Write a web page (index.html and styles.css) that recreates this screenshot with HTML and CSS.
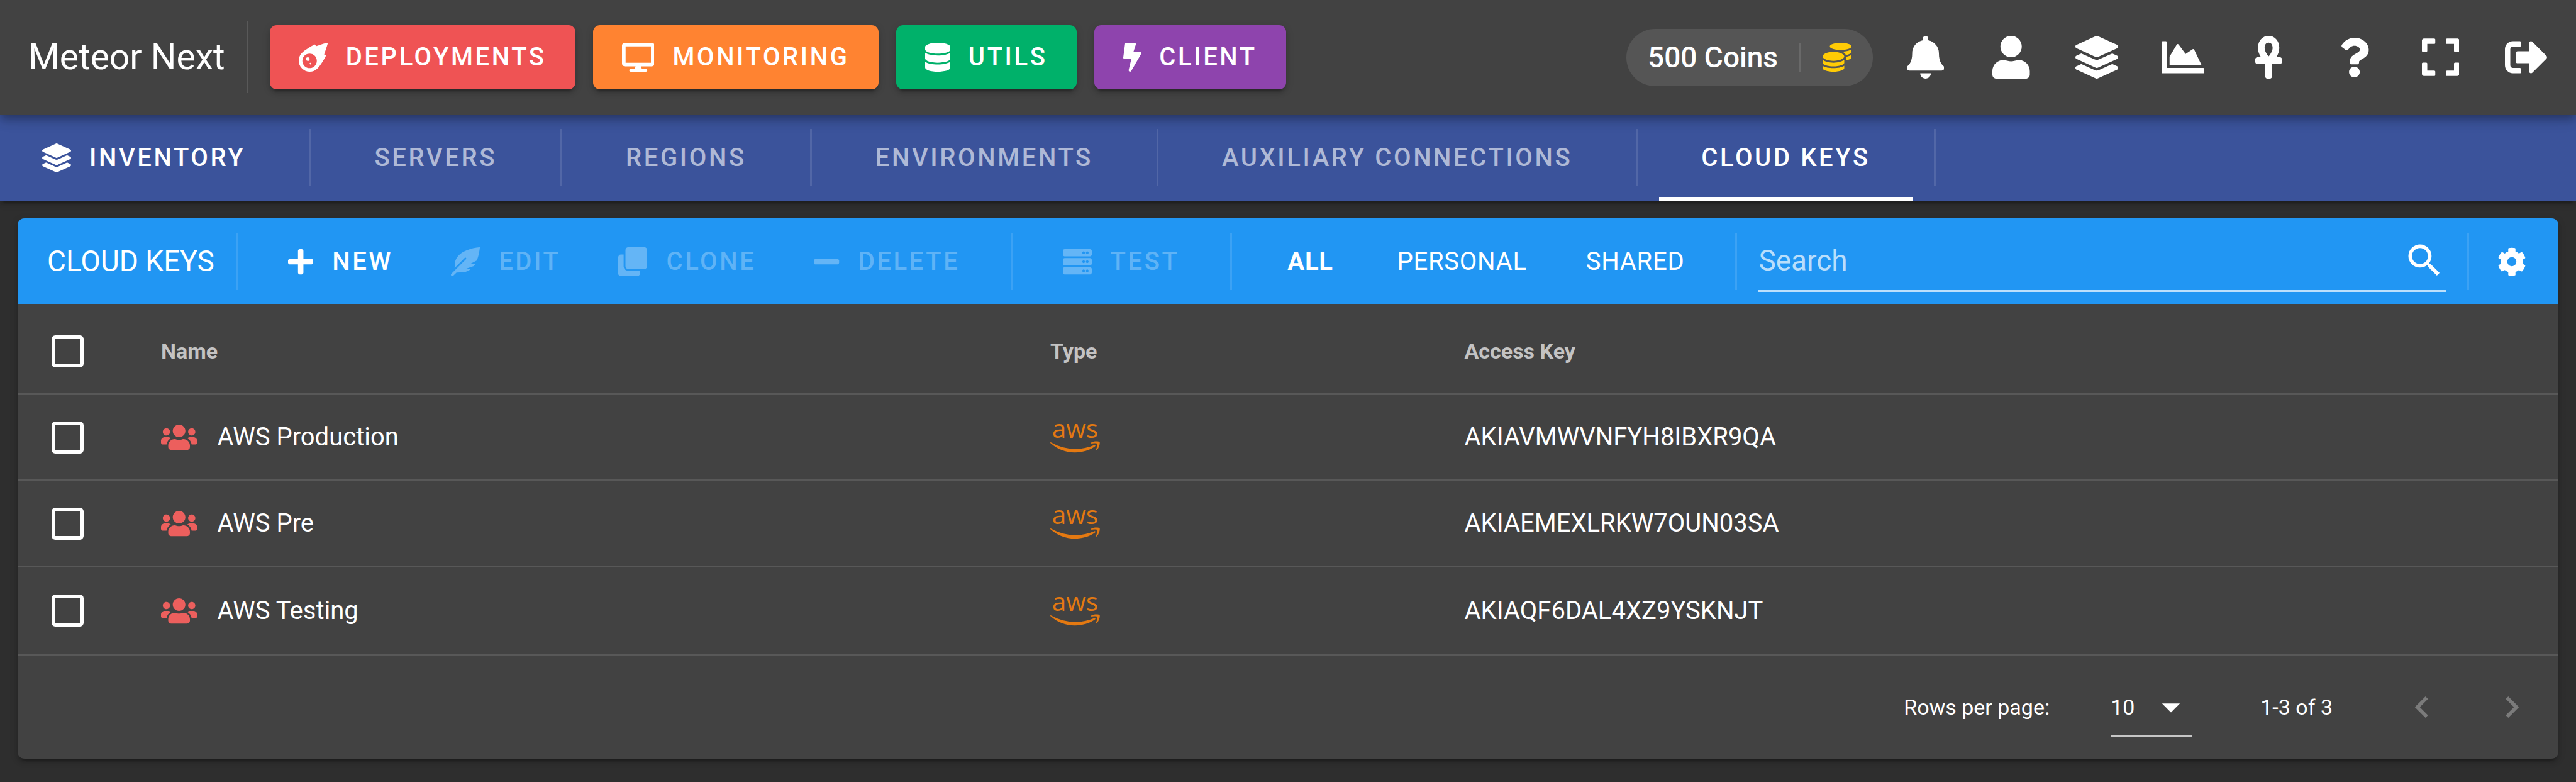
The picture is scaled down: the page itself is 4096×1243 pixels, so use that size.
FILE: index.html
```html
<!DOCTYPE html>
<html lang="en">
<head>
<meta charset="utf-8">
<title>Meteor Next - Cloud Keys</title>
<meta name="viewport" content="width=device-width, initial-scale=1">
<link rel="stylesheet" href="styles.css">
</head>
<body>
<svg class="sprite" aria-hidden="true">
  <defs>
    <path id="i-meteor" d="M511.328,20.8027c-11.60759,38.70264-34.30724,111.70173-61.30311,187.70077,6.99893,2.09372,13.4042,4,18.60653,5.59368a16.06158,16.06158,0,0,1,9.49854,22.906c-22.106,42.29635-82.69047,152.795-142.47819,214.40356-.99984,1.09373-1.99969,2.5-2.99954,3.49995A194.83046,194.83046,0,1,1,57.085,179.41009c.99985-1,2.40588-2,3.49947-3,61.59994-59.90549,171.97367-120.40473,214.37343-142.4982a16.058,16.058,0,0,1,22.90274,9.49988c1.59351,5.09368,3.49947,11.5936,5.5929,18.59351C379.34818,35.00565,452.43074,12.30281,491.12794.70921A16.18325,16.18325,0,0,1,511.328,20.8027ZM319.951,320.00207A127.98041,127.98041,0,1,0,191.97061,448.00046,127.97573,127.97573,0,0,0,319.951,320.00207Zm-127.98041-31.9996a31.9951,31.9951,0,1,1-31.9951-31.9996A31.959,31.959,0,0,1,191.97061,288.00247Zm31.9951,79.999a15.99755,15.99755,0,1,1-15.99755-15.9998A16.04975,16.04975,0,0,1,223.96571,368.00147Z"/>
    <path id="i-desktop" d="M528 0H48C21.5 0 0 21.5 0 48v320c0 26.5 21.5 48 48 48h192l-16 48h-72c-13.3 0-24 10.7-24 24s10.7 24 24 24h272c13.3 0 24-10.7 24-24s-10.7-24-24-24h-72l-16-48h192c26.5 0 48-21.5 48-48V48c0-26.5-21.5-48-48-48zm-16 352H64V64h448v288z"/>
    <path id="i-database" d="M448 73.143v45.714C448 159.143 347.667 192 224 192S0 159.143 0 118.857V73.143C0 32.857 100.333 0 224 0s224 32.857 224 73.143zM448 176v102.857C448 319.143 347.667 352 224 352S0 319.143 0 278.857V176c48.125 33.143 136.208 48.572 224 48.572S399.874 209.143 448 176zm0 160v102.857C448 479.143 347.667 512 224 512S0 479.143 0 438.857V336c48.125 33.143 136.208 48.572 224 48.572S399.874 369.143 448 336z"/>
    <path id="i-bolt" d="M296 160H180.6l42.6-129.8C227.2 15 215.7 0 200 0H56C44 0 33.8 8.9 32.2 20.8l-32 240C-1.7 275.2 9.5 288 24 288h118.7L96.6 482.5c-3.6 15.2 8 29.5 23.3 29.5 8.4 0 16.4-4.4 20.8-12l176-304c9.3-15.9-2.2-36-20.7-36z"/>
    <path id="i-coins" d="M0 405.3V448c0 35.3 86 64 192 64s192-28.7 192-64v-42.7C342.7 434.4 267.2 448 192 448S41.3 434.4 0 405.3zM320 128c106 0 192-28.7 192-64S426 0 320 0 128 28.7 128 64s86 64 192 64zM0 300.4V352c0 35.3 86 64 192 64s192-28.7 192-64v-51.6c-41.3 34-116.9 51.6-192 51.6S41.3 334.4 0 300.4zm416 11c57.3-11.1 96-31.7 96-55.4v-42.7c-23.2 16.4-57.3 27.6-96 34.5v63.6zM192 160C86 160 0 195.8 0 240s86 80 192 80 192-35.8 192-80-86-80-192-80zm219.3 56.3c60-10.8 100.7-32 100.7-56.3v-42.7c-35.5 25.1-96.5 38.6-160.7 41.8 29.5 14.3 51.2 33.5 60 57.2z"/>
    <path id="i-bell" d="M224 512c35.32 0 63.97-28.65 63.97-64H160.03c0 35.35 28.65 64 63.97 64zm215.39-149.71c-19.32-20.76-55.47-51.99-55.47-154.29 0-77.7-54.48-139.9-127.94-155.16V32c0-17.67-14.32-32-31.98-32s-31.98 14.33-31.98 32v20.84C118.56 68.1 64.08 130.3 64.08 208c0 102.3-36.15 133.53-55.47 154.29-6 6.45-8.66 14.16-8.61 21.71.11 16.4 12.98 32 32.1 32h383.8c19.12 0 32-15.6 32.1-32 .05-7.55-2.61-15.27-8.61-21.71z"/>
    <path id="i-user" d="M224 256c70.7 0 128-57.3 128-128S294.7 0 224 0 96 57.3 96 128s57.3 128 128 128zm89.6 32h-16.7c-22.2 10.2-46.9 16-72.9 16s-50.6-5.8-72.9-16h-16.7C60.2 288 0 348.2 0 422.4V464c0 26.5 21.5 48 48 48h352c26.5 0 48-21.5 48-48v-41.6c0-74.2-60.2-134.4-134.4-134.4z"/>
    <path id="i-layers" d="M12.41 148.02l232.94 105.67c6.8 3.09 14.49 3.09 21.29 0l232.94-105.67c16.55-7.51 16.55-32.52 0-40.03L266.65 2.31a25.607 25.607 0 0 0-21.29 0L12.41 107.98c-16.55 7.51-16.55 32.53 0 40.04zm487.18 88.28l-58.09-26.33-161.64 73.27c-7.56 3.43-15.59 5.17-23.86 5.17s-16.29-1.74-23.86-5.17L70.51 209.97l-58.1 26.33c-16.55 7.5-16.55 32.5 0 40l232.94 105.59c6.8 3.08 14.49 3.08 21.29 0L499.59 276.3c16.55-7.5 16.55-32.5 0-40zm0 127.8l-57.87-26.23-161.86 73.37c-7.56 3.43-15.59 5.17-23.86 5.17s-16.29-1.74-23.86-5.17L70.29 337.87 12.41 364.1c-16.55 7.5-16.55 32.5 0 40l232.94 105.59c6.8 3.08 14.49 3.08 21.29 0L499.59 404.1c16.55-7.5 16.55-32.5 0-40z"/>
    <path id="i-chart" d="M500 384c6.6 0 12 5.4 12 12v40c0 6.6-5.4 12-12 12H12c-6.6 0-12-5.4-12-12V76c0-6.6 5.4-12 12-12h40c6.6 0 12 5.4 12 12v308h436zM372.7 159.5L288 216l-85.3-113.7c-5.1-6.8-15.5-6.3-19.9 1L96 248v104h384l-89.9-187.8c-3.2-6.5-11.4-8.7-17.4-4.7z"/>
    <path id="i-ankh" d="M296 256h-44.62C272.46 222.55 288 181.65 288 144 288 55.63 230.69 0 160 0S32 55.63 32 144c0 37.65 15.54 78.55 36.62 112H24c-13.25 0-24 10.74-24 24v32c0 13.25 10.75 24 24 24h96v152c0 13.25 10.75 24 24 24h32c13.25 0 24-10.75 24-24V336h96c13.25 0 24-10.75 24-24v-32c0-13.26-10.75-24-24-24zM160 80c29.61 0 48 24.52 48 64 0 34.66-27.14 78.14-48 100.87-20.86-22.72-48-66.21-48-100.87 0-39.48 18.39-64 48-64z"/>
    <path id="i-question" d="M202.021 0C122.202 0 70.503 32.703 29.914 91.026c-7.363 10.58-5.093 25.086 5.178 32.874l43.138 32.709c10.373 7.865 25.132 6.026 33.253-4.148 25.049-31.381 43.63-49.449 82.757-49.449 30.764 0 68.816 19.799 68.816 49.631 0 22.552-18.617 34.134-48.993 51.164-35.423 19.86-82.299 44.576-82.299 106.405V320c0 13.255 10.745 24 24 24h72.471c13.255 0 24-10.745 24-24v-5.773c0-42.86 125.268-44.645 125.268-160.627C377.504 66.256 286.902 0 202.021 0zM192 373.459c-38.196 0-69.271 31.075-69.271 69.271 0 38.195 31.075 69.27 69.271 69.27s69.271-31.075 69.271-69.271-31.075-69.27-69.271-69.27z"/>
    <path id="i-expand" d="M0 180V56c0-13.3 10.7-24 24-24h124c6.6 0 12 5.4 12 12v40c0 6.6-5.4 12-12 12H64v84c0 6.6-5.4 12-12 12H12c-6.6 0-12-5.4-12-12zM288 44v40c0 6.6 5.4 12 12 12h84v84c0 6.6 5.4 12 12 12h40c6.6 0 12-5.4 12-12V56c0-13.3-10.7-24-24-24H300c-6.6 0-12 5.4-12 12zm148 276h-40c-6.6 0-12 5.4-12 12v84h-84c-6.6 0-12 5.4-12 12v40c0 6.6 5.4 12 12 12h124c13.3 0 24-10.7 24-24V332c0-6.6-5.4-12-12-12zM160 468v-40c0-6.6-5.4-12-12-12H64v-84c0-6.6-5.4-12-12-12H12c-6.6 0-12 5.4-12 12v124c0 13.3 10.7 24 24 24h124c6.6 0 12-5.4 12-12z"/>
    <path id="i-signout" d="M497 273L329 441c-15 15-41 4.5-41-17v-96H152c-13.3 0-24-10.7-24-24v-96c0-13.3 10.7-24 24-24h136V88c0-21.4 25.9-32 41-17l168 168c9.3 9.4 9.3 24.6 0 34zM192 436v-40c0-6.6-5.4-12-12-12H96c-17.7 0-32-14.3-32-32V160c0-17.7 14.3-32 32-32h84c6.6 0 12-5.4 12-12V76c0-6.6-5.4-12-12-12H96c-53 0-96 43-96 96v192c0 53 43 96 96 96h84c6.6 0 12-5.4 12-12z"/>
    <path id="i-plus" d="M416 208H272V64c0-17.67-14.33-32-32-32h-32c-17.67 0-32 14.33-32 32v144H32c-17.67 0-32 14.33-32 32v32c0 17.67 14.33 32 32 32h144v144c0 17.67 14.33 32 32 32h32c17.67 0 32-14.33 32-32V304h144c17.67 0 32-14.33 32-32v-32c0-17.67-14.33-32-32-32z"/>
    <path id="i-minus" d="M416 208H32c-17.67 0-32 14.33-32 32v32c0 17.67 14.33 32 32 32h384c17.67 0 32-14.33 32-32v-32c0-17.67-14.33-32-32-32z"/>
    <path id="i-feather" d="M512 0C460.22 3.56 96.44 38.2 71.01 287.61c-3.09 26.66-4.84 53.44-5.99 80.24l178.87-178.69c6.25-6.25 16.4-6.25 22.65 0s6.25 16.38 0 22.63L7.04 471.03c-9.38 9.37-9.38 24.57 0 33.94 9.38 9.37 24.6 9.37 33.98 0l57.13-57.07c42.09-.14 84.15-2.53 125.96-7.36 53.48-5.44 97.02-26.47 132.58-56.54H255.74l146.79-48.88c11.25-14.89 21.37-30.71 30.45-47.12h-81.14l106.54-53.21C500.29 132.86 510.19 26.26 512 0z"/>
    <path id="i-clone" d="M464 0c26.51 0 48 21.49 48 48v288c0 26.51-21.49 48-48 48H176c-26.51 0-48-21.49-48-48V48c0-26.51 21.49-48 48-48h288M176 416c-44.112 0-80-35.888-80-80V128H48c-26.51 0-48 21.49-48 48v288c0 26.51 21.49 48 48 48h288c26.51 0 48-21.49 48-48v-48H176z"/>
    <path id="i-server" d="M480 160H32c-17.673 0-32-14.327-32-32V64c0-17.673 14.327-32 32-32h448c17.673 0 32 14.327 32 32v64c0 17.673-14.327 32-32 32zm-48-88c-13.255 0-24 10.745-24 24s10.745 24 24 24 24-10.745 24-24-10.745-24-24-24zm-64 0c-13.255 0-24 10.745-24 24s10.745 24 24 24 24-10.745 24-24-10.745-24-24-24zm112 248H32c-17.673 0-32-14.327-32-32v-64c0-17.673 14.327-32 32-32h448c17.673 0 32 14.327 32 32v64c0 17.673-14.327 32-32 32zm-48-88c-13.255 0-24 10.745-24 24s10.745 24 24 24 24-10.745 24-24-10.745-24-24-24zm-64 0c-13.255 0-24 10.745-24 24s10.745 24 24 24 24-10.745 24-24-10.745-24-24-24zm112 248H32c-17.673 0-32-14.327-32-32v-64c0-17.673 14.327-32 32-32h448c17.673 0 32 14.327 32 32v64c0 17.673-14.327 32-32 32zm-48-88c-13.255 0-24 10.745-24 24s10.745 24 24 24 24-10.745 24-24-10.745-24-24-24zm-64 0c-13.255 0-24 10.745-24 24s10.745 24 24 24 24-10.745 24-24-10.745-24-24-24z"/>
    <path id="i-cog" d="M487.4 315.7l-42.6-24.6c4.3-23.2 4.3-47 0-70.2l42.6-24.6c4.9-2.8 7.1-8.6 5.5-14-11.1-35.6-30-67.8-54.7-94.6-3.8-4.1-10-5.1-14.8-2.3L380.8 110c-17.9-15.4-38.5-27.3-60.8-35.1V25.8c0-5.6-3.9-10.5-9.4-11.7-36.7-8.2-74.3-7.8-109.2 0-5.5 1.2-9.4 6.1-9.4 11.7V75c-22.2 7.9-42.8 19.8-60.8 35.1L88.7 85.5c-4.9-2.8-11-1.9-14.8 2.3-24.7 26.7-43.6 58.9-54.7 94.6-1.7 5.4.6 11.2 5.5 14L67.3 221c-4.3 23.2-4.3 47 0 70.2l-42.6 24.6c-4.9 2.8-7.1 8.6-5.5 14 11.1 35.6 30 67.8 54.7 94.6 3.8 4.1 10 5.1 14.8 2.3l42.6-24.6c17.9 15.4 38.5 27.3 60.8 35.1v49.2c0 5.6 3.9 10.5 9.4 11.7 36.7 8.2 74.3 7.8 109.2 0 5.5-1.2 9.4-6.1 9.4-11.7v-49.2c22.2-7.9 42.8-19.8 60.8-35.1l42.6 24.6c4.9 2.8 11 1.9 14.8-2.3 24.7-26.7 43.6-58.9 54.7-94.6 1.5-5.5-.7-11.3-5.6-14.1zM256 336c-44.1 0-80-35.9-80-80s35.9-80 80-80 80 35.9 80 80-35.9 80-80 80z"/>
    <path id="i-users" d="M96 224c35.3 0 64-28.7 64-64s-28.7-64-64-64-64 28.7-64 64 28.7 64 64 64zm448 0c35.3 0 64-28.7 64-64s-28.7-64-64-64-64 28.7-64 64 28.7 64 64 64zm32 32h-64c-17.6 0-33.5 7.1-45.1 18.6 40.3 22.1 68.9 62 75.1 109.4h66c17.7 0 32-14.3 32-32v-32c0-35.3-28.7-64-64-64zm-256 0c61.9 0 112-50.1 112-112S381.9 32 320 32 208 82.1 208 144s50.1 112 112 112zm76.8 32h-8.3c-20.8 10-43.9 16-68.5 16s-47.6-6-68.5-16h-8.3C179.6 288 128 339.6 128 403.2V432c0 26.5 21.5 48 48 48h288c26.5 0 48-21.5 48-48v-28.8c0-63.6-51.6-115.2-115.2-115.2zm-223.7-13.4C161.5 263.1 145.6 256 128 256H64c-35.3 0-64 28.7-64 64v32c0 17.7 14.3 32 32 32h65.9c6.3-47.4 34.9-87.3 75.2-109.4z"/>
    <path id="i-smile" d="M578.59 368.94c-70.03 51.72-171.69 79.25-258.49 79.25A469.127 469.127 0 0 1 2.83 327.46c-6.53-5.89-.77-13.96 7.17-9.47a637.37 637.37 0 0 0 316.88 84.12 630.22 630.22 0 0 0 241.59-49.55c11.78-5 21.77 7.8 10.12 16.38zm29.19-33.29c-8.96-11.52-59.28-5.38-81.81-2.69-6.79.77-7.94-5.12-1.79-9.47 40.07-28.17 105.88-20.1 113.44-10.63 7.55 9.47-2.05 75.41-39.56 106.91-5.76 4.87-11.27 2.3-8.71-4.1 8.44-21.25 27.39-68.49 18.43-80.02z"/>
  </defs>
</svg>

<header class="topbar">
  <h1 class="brand">Meteor Next</h1>
  <span class="rule"></span>
  <nav class="apps" aria-label="Applications">
    <button type="button" class="btn app app-red"><svg class="icon" viewBox="0 0 512 512"><use href="#i-meteor"/></svg>DEPLOYMENTS</button>
    <button type="button" class="btn app app-orange"><svg class="icon" viewBox="0 0 576 512"><use href="#i-desktop"/></svg>MONITORING</button>
    <button type="button" class="btn app app-green"><svg class="icon" viewBox="0 0 448 512"><use href="#i-database"/></svg>UTILS</button>
    <button type="button" class="btn app app-purple"><svg class="icon" viewBox="0 0 320 512"><use href="#i-bolt"/></svg>CLIENT</button>
  </nav>
  <button type="button" class="coins">500 Coins<span class="coins-rule"></span><svg class="icon" viewBox="0 0 512 512"><use href="#i-coins"/></svg></button>
  <div class="actions">
    <button type="button" class="icon-btn" aria-label="Notifications"><svg class="icon-lg" viewBox="0 0 448 512"><use href="#i-bell"/></svg></button>
    <button type="button" class="icon-btn" aria-label="Profile"><svg class="icon-lg" viewBox="0 0 448 512"><use href="#i-user"/></svg></button>
    <button type="button" class="icon-btn" aria-label="Inventory"><svg class="icon-lg" viewBox="0 0 512 512"><use href="#i-layers"/></svg></button>
    <button type="button" class="icon-btn" aria-label="Statistics"><svg class="icon-lg" viewBox="0 0 512 512"><use href="#i-chart"/></svg></button>
    <button type="button" class="icon-btn" aria-label="Administration"><svg class="icon-lg" viewBox="0 0 320 512"><use href="#i-ankh"/></svg></button>
    <button type="button" class="icon-btn" aria-label="Help"><svg class="icon-md" viewBox="0 0 384 512"><use href="#i-question"/></svg></button>
    <button type="button" class="icon-btn" aria-label="Full screen"><svg class="icon-lg" viewBox="0 0 448 512"><use href="#i-expand"/></svg></button>
    <button type="button" class="icon-btn" aria-label="Log out"><svg class="icon-lg" viewBox="0 0 512 512"><use href="#i-signout"/></svg></button>
  </div>
</header>

<nav class="tabs" aria-label="Inventory">
  <a class="tab tab-home" href="#inventory"><svg class="icon" viewBox="0 0 512 512"><use href="#i-layers"/></svg>INVENTORY</a>
  <span class="rule"></span>
  <a class="tab" href="#servers">SERVERS</a>
  <span class="rule"></span>
  <a class="tab" href="#regions">REGIONS</a>
  <span class="rule"></span>
  <a class="tab" href="#environments">ENVIRONMENTS</a>
  <span class="rule"></span>
  <a class="tab" href="#auxiliary">AUXILIARY CONNECTIONS</a>
  <span class="rule"></span>
  <a class="tab tab-active" href="#cloud-keys" aria-current="page">CLOUD KEYS</a>
  <span class="rule"></span>
</nav>

<main class="page">
  <section class="card">
    <div class="toolbar">
      <h2 class="card-title">CLOUD KEYS</h2>
      <span class="rule"></span>
      <button type="button" class="btn"><svg class="icon" viewBox="0 0 448 512"><use href="#i-plus"/></svg>NEW</button>
      <button type="button" class="btn" disabled><svg class="icon" viewBox="0 0 512 512"><use href="#i-feather"/></svg>EDIT</button>
      <button type="button" class="btn" disabled><svg class="icon" viewBox="0 0 512 512"><use href="#i-clone"/></svg>CLONE</button>
      <button type="button" class="btn" disabled><svg class="icon" viewBox="0 0 448 512"><use href="#i-minus"/></svg>DELETE</button>
      <span class="rule"></span>
      <button type="button" class="btn" disabled><svg class="icon" viewBox="0 0 512 512"><use href="#i-server"/></svg>TEST</button>
      <span class="rule"></span>
      <button type="button" class="filter filter-on" aria-pressed="true">ALL</button>
      <button type="button" class="filter" aria-pressed="false">PERSONAL</button>
      <button type="button" class="filter" aria-pressed="false">SHARED</button>
      <span class="rule"></span>
      <div class="search">
        <input class="search-input" type="text" placeholder="Search" aria-label="Search">
        <svg class="icon-lg" viewBox="0 0 24 24"><path d="M9.5,3A6.5,6.5 0 0,1 16,9.5C16,11.11 15.41,12.59 14.44,13.73L14.71,14H15.5L20.5,19L19,20.5L14,15.5V14.71L13.73,14.44C12.59,15.41 11.11,16 9.5,16A6.5,6.5 0 0,1 3,9.5A6.5,6.5 0 0,1 9.5,3M9.5,5C7,5 5,7 5,9.5C5,12 7,14 9.5,14C12,14 14,12 14,9.5C14,7 12,5 9.5,5Z"/></svg>
      </div>
      <span class="rule"></span>
      <button type="button" class="settings" aria-label="Settings"><svg class="icon" viewBox="0 0 512 512"><use href="#i-cog"/></svg></button>
    </div>

    <table class="keys">
      <colgroup><col class="col-check"><col class="col-name"><col class="col-type"><col></colgroup>
      <thead>
        <tr>
          <th scope="col"><input class="check" type="checkbox" aria-label="Select all"></th>
          <th scope="col">Name</th>
          <th scope="col">Type</th>
          <th scope="col">Access Key</th>
        </tr>
      </thead>
      <tbody>
        <tr>
          <td><input class="check" type="checkbox" aria-label="Select AWS Production"></td>
          <td><div class="name"><svg class="icon shared" viewBox="0 0 640 512"><use href="#i-users"/></svg>AWS Production</div></td>
          <td><svg class="aws" viewBox="0 0 640 512"><text class="aws-word" x="320" y="258">aws</text><use href="#i-smile"/></svg></td>
          <td>AKIAVMWVNFYH8IBXR9QA</td>
        </tr>
        <tr>
          <td><input class="check" type="checkbox" aria-label="Select AWS Pre"></td>
          <td><div class="name"><svg class="icon shared" viewBox="0 0 640 512"><use href="#i-users"/></svg>AWS Pre</div></td>
          <td><svg class="aws" viewBox="0 0 640 512"><text class="aws-word" x="320" y="258">aws</text><use href="#i-smile"/></svg></td>
          <td>AKIAEMEXLRKW7OUN03SA</td>
        </tr>
        <tr>
          <td><input class="check" type="checkbox" aria-label="Select AWS Testing"></td>
          <td><div class="name"><svg class="icon shared" viewBox="0 0 640 512"><use href="#i-users"/></svg>AWS Testing</div></td>
          <td><svg class="aws" viewBox="0 0 640 512"><text class="aws-word" x="320" y="258">aws</text><use href="#i-smile"/></svg></td>
          <td>AKIAQF6DAL4XZ9YSKNJT</td>
        </tr>
      </tbody>
    </table>

    <footer class="pager">
      <label for="rows">Rows per page:</label>
      <div class="select">
        <select id="rows"><option>10</option><option>15</option><option>All</option></select>
        <svg class="icon-lg" viewBox="0 0 24 24"><path d="M7,10L12,15L17,10H7Z"/></svg>
      </div>
      <span class="range">1-3 of 3</span>
      <button type="button" class="page-btn" disabled aria-label="Previous page"><svg class="icon-lg" viewBox="0 0 24 24"><path d="M15.41,16.58L10.83,12L15.41,7.41L14,6L8,12L14,18L15.41,16.58Z"/></svg></button>
      <button type="button" class="page-btn" disabled aria-label="Next page"><svg class="icon-lg" viewBox="0 0 24 24"><path d="M8.59,16.58L13.17,12L8.59,7.41L10,6L16,12L10,18L8.59,16.58Z"/></svg></button>
    </footer>
  </section>
</main>
</body>
</html>
```
FILE: styles.css
```css
*, *::before, *::after { box-sizing: border-box; }

body {
  margin: 0;
  min-height: 100vh;
  background: #2e2e2e;
  color: #fff;
  font-family: Roboto, "Liberation Sans", sans-serif;
  font-size: 40px;
  line-height: 1.5;
}

button, input, select {
  margin: 0;
  padding: 0;
  border: 0;
  background: none;
  color: inherit;
  font: inherit;
}

svg { display: block; flex: none; fill: currentColor; }
.sprite { position: absolute; width: 0; height: 0; }
.icon { height: 46px; }
.icon-md { height: 63px; }
.icon-lg { height: 68px; }

/* thin vertical separators, used in all three bars */
.rule {
  flex: none;
  width: 3px;
  height: 91px;
  margin: 0 34px;
  background: rgba(255, 255, 255, .12);
}

.btn {
  display: flex;
  flex: none;
  align-items: center;
  gap: 30px;
  height: 102px;
  padding: 0 46px;
  font-weight: 500;
  letter-spacing: .09em;
  white-space: nowrap;
}
.btn:disabled { color: rgba(255, 255, 255, .3); }

/* top bar */
.topbar {
  position: relative;
  z-index: 2;
  display: flex;
  align-items: center;
  height: 182px;
  padding: 0 11px 0 45px;
  background: #424242;
  box-shadow: 0 6px 11px -3px rgba(0, 0, 0, .2), 0 11px 14px rgba(0, 0, 0, .14), 0 3px 28px rgba(0, 0, 0, .12);
}
.brand { margin: 0; font-size: 57px; font-weight: 400; white-space: nowrap; }
.topbar .rule { height: 114px; }
.apps { display: flex; gap: 28px; }
.app {
  gap: 29px;
  border-radius: 11px;
  box-shadow: 0 9px 3px -6px rgba(0, 0, 0, .2), 0 6px 6px rgba(0, 0, 0, .14), 0 3px 14px rgba(0, 0, 0, .12);
}
.app-red { background: #ef5354; }
.app-orange { background: #ff8331; }
.app-green { background: #00b16a; }
.app-purple { background: #8e44ad; }

.coins {
  display: flex;
  align-items: center;
  height: 91px;
  margin: 0 15px 0 auto;
  padding: 0 34px;
  border-radius: 46px;
  background: #555;
  font-size: 46px;
  font-weight: 500;
  white-space: nowrap;
}
.coins .icon { color: #ffcb05; }
.coins-rule { width: 3px; height: 46px; margin: 0 34px; background: rgba(255, 255, 255, .12); }

.actions { display: grid; flex: 0 0 1092px; grid-template-columns: repeat(8, 1fr); }
.icon-btn { display: flex; align-items: center; justify-content: center; height: 137px; }

/* tab strip */
.tabs {
  position: relative;
  z-index: 1;
  display: flex;
  align-items: center;
  height: 137px;
  background: #3b539b;
  box-shadow: 0 9px 3px -6px rgba(0, 0, 0, .2), 0 6px 6px rgba(0, 0, 0, .14), 0 3px 14px rgba(0, 0, 0, .12);
}
.tab {
  display: flex;
  align-items: center;
  gap: 29px;
  height: 100%;
  padding: 0 67px;
  border: solid transparent;
  border-width: 6px 0;
  color: rgba(255, 255, 255, .6);
  font-weight: 500;
  letter-spacing: .09em;
  text-decoration: none;
  white-space: nowrap;
}
.tab-home { color: #fff; }
.tab-active { border-bottom-color: #fff; color: #fff; }

/* card */
.page { padding: 28px; }
.card {
  overflow: hidden;
  border-radius: 11px;
  background: #424242;
  box-shadow: 0 9px 3px -6px rgba(0, 0, 0, .2), 0 6px 6px rgba(0, 0, 0, .14), 0 3px 14px rgba(0, 0, 0, .12);
}
.toolbar {
  display: flex;
  align-items: center;
  height: 137px;
  padding: 0 51px 0 47px;
  background: #2196f3;
}
.card-title { margin: 0; font-size: 46px; font-weight: 400; white-space: nowrap; }
.filter { flex: none; min-width: 182px; height: 102px; padding: 0 47px; letter-spacing: .018em; }
.filter-on { font-weight: 700; }
.search {
  display: flex;
  flex: 1;
  align-items: center;
  height: 97px;
  border-bottom: 3px solid rgba(255, 255, 255, .7);
  font-size: 46px;
}
.search-input { flex: 1; min-width: 0; outline: 0; }
.search-input::placeholder { color: rgba(255, 255, 255, .7); opacity: 1; }
.settings { margin-left: 11px; }

/* table */
.keys { width: 100%; border-spacing: 0; table-layout: fixed; }
.col-check { width: 182px; }
.col-name { width: 35%; }
.col-type { width: 16.3%; }
.keys th, .keys td {
  height: 137px;
  padding: 0 46px;
  border-bottom: 3px solid #585858;
  text-align: left;
  vertical-align: middle;
}
.keys th {
  height: 144px;
  padding-top: 8px;
  color: rgba(255, 255, 255, .7);
  font-size: 34px;
  font-weight: 700;
}
.keys tbody tr:last-child td { border-bottom: 0; }
.check {
  display: block;
  appearance: none;
  width: 51px;
  height: 51px;
  margin-left: 8px;
  border: 6px solid #fff;
  border-radius: 6px;
}
.name { display: flex; align-items: center; gap: 32px; }
.shared { color: #ec5f5d; }
.aws { height: 63px; overflow: visible; color: #e47911; }
.aws-word { font-family: "Open Sans", "Noto Sans", sans-serif; font-size: 330px; font-weight: 500; text-anchor: middle; }

/* pager */
.pager {
  display: flex;
  align-items: center;
  justify-content: flex-end;
  height: 167px;
  padding-right: 40px;
  border-top: 3px solid #585858;
  font-size: 34px;
}
.select {
  display: grid;
  align-items: center;
  width: 130px;
  height: 96px;
  padding-top: 3px;
  margin: 0 108px 0 97px;
  border-bottom: 3px solid #c6c6c6;
}
.select select, .select svg { grid-area: 1 / 1; }
.select select { appearance: none; width: 100%; outline: 0; }
.select svg { justify-self: end; pointer-events: none; }
.range { margin-right: 108px; }
.page-btn { color: rgba(255, 255, 255, .3); }
.page-btn + .page-btn { margin-left: 75px; }
```
